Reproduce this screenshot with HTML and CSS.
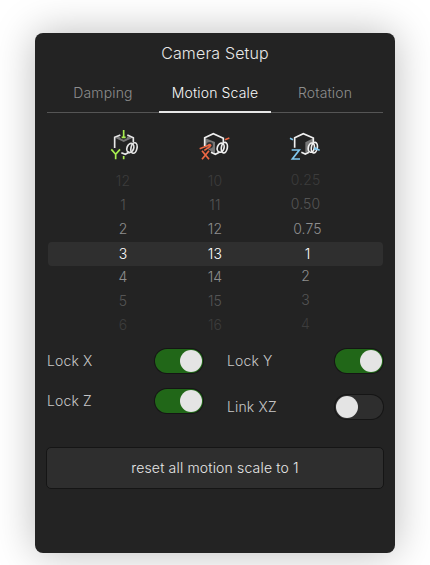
FILE: index.html
```html
<!DOCTYPE html>
<html lang="en">
<head>
<meta charset="utf-8">
<title>Camera Setup</title>
<link rel="stylesheet" href="styles.css">
</head>
<body>
<main class="panel">
  <h1 class="title">Camera Setup</h1>
  <nav class="tabs">
    <a class="tab">Damping</a>
    <a class="tab active">Motion Scale</a>
    <a class="tab last">Rotation</a>
  </nav>
  <div class="icons">
    <svg class="icon" viewBox="0 0 180 150" fill="none" stroke-width="5">
      <path d="M61 54L86 66L112 54L98 49L94 56L86 59L78 56L72 49Z" fill="#777"/>
      <path d="M59 84V52L76 45M97 45L115 53V67M79 98L91 103L103 96" stroke="#e6e6e6"/>
      <ellipse cx="106" cy="84" rx="10" ry="14" transform="rotate(20 106 84)" stroke="#e6e6e6"/>
      <ellipse cx="117" cy="84" rx="9" ry="16" transform="rotate(12 117 84)" stroke="#e6e6e6"/>
      <path d="M86 30V53M80 52H92M86 108V118M49 88L62 103L75 88M62 103V118" stroke="#a8ee50"/>
    </svg>
    <svg class="icon" viewBox="0 0 180 150" fill="none" stroke-width="5">
      <path d="M60 54L90 66V100L78 94L70 88L60 78Z" fill="#777"/>
      <circle cx="74" cy="76" r="10" fill="#333"/>
      <path d="M59 78V53L85 41L115 55V69M78 97L91 103L103 97" stroke="#f0f0f0"/>
      <ellipse cx="107" cy="83" rx="10" ry="14" transform="rotate(18 107 83)" stroke="#f0f0f0"/>
      <ellipse cx="118" cy="83" rx="9" ry="16" transform="rotate(10 118 83)" stroke="#f0f0f0"/>
      <path d="M44 86L75 74M58 91L76 79M120 59L133 54" stroke="#ee6844"/>
      <path d="M51 92L72 118M72 92L51 118" stroke="#ee6844"/>
      <circle cx="74" cy="76" r="5" fill="#ee6844"/>
    </svg>
    <svg class="icon" viewBox="0 0 180 150" fill="none" stroke-width="5">
      <path d="M91 67L114 55V69L103 78V94L91 99Z" fill="#777"/>
      <path d="M59 83V53L85 41L115 54V68M79 97L91 102L102 97" stroke="#f0f0f0"/>
      <ellipse cx="109" cy="83" rx="9" ry="14" transform="rotate(12 109 83)" stroke="#f0f0f0"/>
      <ellipse cx="118" cy="83" rx="9" ry="16" transform="rotate(10 118 83)" stroke="#f0f0f0"/>
      <path d="M45 55L54 59M120 85L134 91M50 90H73L52 117H75" stroke="#80c8ef"/>
      <circle cx="121" cy="86" r="4" fill="#80c8ef"/>
    </svg>
  </div>
  <section class="picker">
    <div class="wheel">
      <span class="far">12</span><span class="mid">1</span><span class="near">2</span><span class="selected">3</span><span class="near">4</span><span class="mid">5</span><span class="far">6</span>
    </div>
    <div class="wheel">
      <span class="far">10</span><span class="mid">11</span><span class="near">12</span><span class="selected">13</span><span class="near">14</span><span class="mid">15</span><span class="far">16</span>
    </div>
    <div class="wheel fraction">
      <span class="far">0.25</span><span class="mid">0.50</span><span class="near steady">0.75</span><span class="selected steady">1</span><span class="near">2</span><span class="mid">3</span><span class="far">4</span>
    </div>
  </section>
  <section class="options">
    <div class="column">
      <div class="option"><span>Lock X</span><span class="toggle on"><i class="knob"></i></span></div>
      <div class="option"><span>Lock Z</span><span class="toggle on"><i class="knob"></i></span></div>
    </div>
    <div class="column loose">
      <div class="option"><span>Lock Y</span><span class="toggle on"><i class="knob"></i></span></div>
      <div class="option"><span>Link XZ</span><span class="toggle"><i class="knob"></i></span></div>
    </div>
  </section>
  <button class="reset">reset all motion scale to 1</button>
</main>
</body>
</html>
```
FILE: styles.css
```css
* { box-sizing: border-box; }
body {
  margin: 0;
  height: 565px;
  padding: 33px 35px 0;
  overflow: hidden;
  background: #fff;
  font: 300 14px/24px Inter, sans-serif;
  letter-spacing: 0.15px;
}
.panel {
  height: 520px;
  padding: 0 12px;
  border-radius: 8px;
  background: #232323;
  color: #c8c8c8;
  box-shadow: 0 0 40px rgba(0, 0, 0, 0.27);
}
.title {
  margin: 0;
  padding: 8px 0 1px;
  font-size: 16px;
  font-weight: 300;
  line-height: 24px;
  text-align: center;
  color: #e8e8e8;
  letter-spacing: 0.15px;
}
.tabs {
  display: grid;
  grid-template-columns: repeat(3, 1fr);
  height: 47px;
  padding-top: 15px;
  text-align: center;
  color: #8e8e8e;
  background: linear-gradient(#555, #555) bottom / 100% 1px no-repeat;
}
.tab.active {
  height: 32px;
  color: #f8f8f8;
  border-bottom: 2px solid #e6e6e6;
}
.tab.last { padding-right: 4px; }
.icons {
  display: flex;
  justify-content: center;
  gap: 30px;
  height: 56px;
  padding-top: 7px;
}
.icon {
  width: 60px;
  height: 50px;
}
.picker {
  display: flex;
  justify-content: center;
  position: relative;
  height: 168px;
  margin-left: 1px;
}
.picker::before {
  content: "";
  position: absolute;
  inset: 73px 0 auto;
  height: 24px;
  border-radius: 4px;
  background: #2f2f2f;
}
.wheel {
  display: flex;
  flex-direction: column;
  position: relative;
  width: 92px;
  padding-right: 1px;
  text-align: center;
}
.selected {
  height: 24px;
  padding-top: 1px;
  color: #fff;
}
.near { color: #8e8e8e; }
.mid { color: #555; }
.far { color: #3c3c3c; }
.wheel.fraction { padding-right: 0; }
.fraction span:not(.steady) {
  transform: translate(-2px, -1px);
}
.options {
  display: grid;
  grid-template-columns: 1fr 1fr;
  gap: 24px;
  padding-top: 12px;
}
.column {
  display: flex;
  flex-direction: column;
  gap: 16px;
}
.loose { gap: 22px; }
.option {
  display: flex;
  justify-content: space-between;
  height: 24px;
}
.toggle {
  display: flex;
  width: 48px;
  padding: 1px;
  border-radius: 12px;
  background: #2e2e2e;
  box-shadow: 0 0 0 1px #151515;
}
.toggle.on {
  justify-content: flex-end;
  background: #216718;
}
.knob {
  width: 22px;
  height: 22px;
  border-radius: 50%;
  background: #e4e4e4;
}
.reset {
  display: block;
  width: 338px;
  height: 42px;
  margin: 28px -1px 0;
  padding: 0;
  border: 1px solid #151515;
  border-radius: 5px;
  background: #2e2e2e;
  color: #e8e8e8;
  font: inherit;
  letter-spacing: 0.17px;
}
```
